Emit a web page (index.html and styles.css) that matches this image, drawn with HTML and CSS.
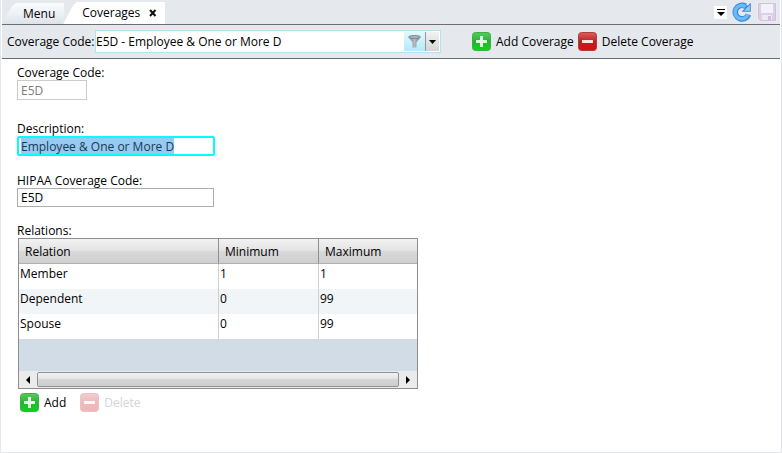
FILE: index.html
```html
<!DOCTYPE html>
<html lang="en">
<head>
	<meta charset="utf-8">
	<title>Coverages</title>
	<link rel="stylesheet" href="styles.css">
</head>
<body>
<!-- shared icons -->
<svg class="defs" width="0" height="0">
	<defs>
		<linearGradient id="green" x1="0" y1="0" x2="0" y2="1">
			<stop offset="0" stop-color="#5cc95f"/>
			<stop offset="0.5" stop-color="#1fb82c"/>
			<stop offset="1" stop-color="#0fd41c"/>
		</linearGradient>
		<linearGradient id="red" x1="0" y1="0" x2="0" y2="1">
			<stop offset="0" stop-color="#d9605f"/>
			<stop offset="0.5" stop-color="#c01f22"/>
			<stop offset="1" stop-color="#d80f12"/>
		</linearGradient>
		<linearGradient id="steel" x1="0" y1="0" x2="1" y2="0">
			<stop offset="0" stop-color="#77818a"/>
			<stop offset="0.5" stop-color="#b5babe"/>
			<stop offset="1" stop-color="#737b83"/>
		</linearGradient>
		<symbol id="plus" viewBox="0 0 19 19">
			<rect x="0.5" y="0.5" width="18" height="18" rx="3" fill="url(#green)" stroke="#3eae48"/>
			<path d="M8 4h3v4h4v3h-4v4h-3v-4h-4v-3h4z" fill="#e4f5e4"/>
		</symbol>
		<symbol id="minus" viewBox="0 0 19 19">
			<rect x="0.5" y="0.5" width="18" height="18" rx="3" fill="url(#red)" stroke="#b9393b"/>
			<path d="M4 8h11v3h-11z" fill="#f8e6e6"/>
		</symbol>
	</defs>
</svg>

<div class="window">
	<header class="tabbar">
		<nav class="tabs">
			<button class="tab" type="button">Menu</button>
			<button class="tab active" type="button">Coverages
				<svg class="close" width="8" height="8" viewBox="0 0 8 8"><path d="M1 1L6.5 7M6.5 1L1 7" stroke="#111" stroke-width="2"/></svg>
			</button>
		</nav>
		<div class="tools">
			<button class="more" type="button" aria-label="More">
				<svg width="8" height="7" viewBox="0 0 8 7"><path d="M0 0h8v1H0zM0 3h8L4 7z" fill="#000"/></svg>
			</button>
			<button class="tool" type="button" aria-label="Refresh">
				<svg width="20" height="20" viewBox="0 0 20 20">
					<path d="M16.5 12.5A6.8 6.8 0 1 1 13.5 4.2" fill="none" stroke="#3b8ad8" stroke-width="5.6"/>
					<path d="M18.8 0.800v9h-9.300l3-3-2-2 3-2.500 2 1.500z" fill="#3b8ad8"/>
					<path d="M16 12.500A6.700 6.700 0 1 1 13.500 4.600" fill="none" stroke="#69bafa" stroke-width="3.400"/>
					<path d="M17.800 3v5.800h-5.800z" fill="#8fcffc"/>
				</svg>
			</button>
			<button class="tool save" type="button" aria-label="Save" disabled>
				<svg width="20" height="20" viewBox="0 0 20 20">
					<path d="M1.500 1.500h17v17h-15l-2-2z" fill="#dccfe8" stroke="#cfc0df"/>
					<rect x="4" y="2" width="12" height="9" fill="#f3f2f9"/>
					<rect x="5" y="13" width="10" height="5" fill="#eceaf2"/>
					<rect x="11" y="14" width="3" height="4" fill="#cfc0df"/>
				</svg>
			</button>
		</div>
	</header>

	<div class="toolbar">
		<label for="coverage">Coverage Code:</label>
		<div class="combo">
			<select id="coverage">
				<option>E5D - Employee &amp; One or More D</option>
			</select>
			<button class="filter" type="button" aria-label="Filter">
				<svg width="13" height="13" viewBox="0 0 13 13">
					<path d="M0.500 2L4.500 7.500V12.500H8.500V7.500L12.500 2z" fill="url(#steel)"/>
					<ellipse cx="6.500" cy="2" rx="6" ry="1.500" fill="#a9b3ba" stroke="#7f8990"/>
				</svg>
			</button>
			<button class="drop" type="button" aria-label="Open list">
				<svg width="7" height="4" viewBox="0 0 7 4"><path d="M0 0h7L3.500 4z" fill="#000"/></svg>
			</button>
		</div>
		<div class="actions">
			<button class="action" type="button"><svg width="19" height="19"><use href="#plus"/></svg>Add Coverage</button>
			<button class="action" type="button"><svg width="19" height="19"><use href="#minus"/></svg>Delete Coverage</button>
		</div>
	</div>

	<main class="content">
		<div class="field code">
			<label for="code">Coverage Code:</label>
			<input id="code" type="text" value="E5D" disabled>
		</div>
		<div class="field description">
			<label for="description">Description:</label>
			<input id="description" type="text" value="Employee &amp; One or More D">
		</div>
		<div class="field hipaa">
			<label for="hipaa">HIPAA Coverage Code:</label>
			<input id="hipaa" type="text" value="E5D">
		</div>

		<div class="relations-title">Relations:</div>
		<div class="grid">
			<table>
				<thead>
					<tr><th class="wide">Relation</th><th class="narrow">Minimum</th><th>Maximum</th></tr>
				</thead>
				<tbody>
					<tr><td>Member</td><td>1</td><td>1</td></tr>
					<tr><td>Dependent</td><td>0</td><td>99</td></tr>
					<tr><td>Spouse</td><td>0</td><td>99</td></tr>
				</tbody>
			</table>
			<div class="scrollbar">
				<button type="button" aria-label="Scroll left"><svg width="4" height="8" viewBox="0 0 4 8"><path d="M4 0v8L0 4z"/></svg></button>
				<div class="thumb"></div>
				<button type="button" aria-label="Scroll right"><svg width="4" height="8" viewBox="0 0 4 8"><path d="M0 0v8L4 4z"/></svg></button>
			</div>
		</div>
		<div class="row-actions">
			<button class="action" type="button"><svg width="19" height="19"><use href="#plus"/></svg>Add</button>
			<button class="action" type="button" disabled><svg width="19" height="19"><use href="#minus"/></svg>Delete</button>
		</div>
	</main>
</div>
<script>
	// start with the description ready to be overtyped
	const description = document.getElementById("description");
	description.focus();
	description.select();
</script>
</body>
</html>
```
FILE: styles.css
```css
* {
	box-sizing: border-box;
}
body {
	margin: 0;
	background: #fff;
	color: #000;
	font-family: "Open Sans", "Noto Sans", sans-serif;
	font-size: 12px;
	line-height: 16px;
}
button, input, select {
	margin: 0;
	padding: 0;
	border: 0;
	background: none;
	color: inherit;
	font: inherit;
}
svg {
	display: block;
	flex: none;
}
.defs {
	position: absolute;
}
.window {
	min-height: 100vh;
	padding: 0 1px;
	border: 1px solid #e5e5f0;
	border-top: 0;
}

/* tabs */
.tabbar {
	display: flex;
	justify-content: space-between;
	height: 25px;
	background: #e5e8ed;
	border-bottom: 1px solid #6e6e72;
}
.tabs {
	display: flex;
	align-items: flex-end;
}
.tab {
	display: flex;
	align-items: center;
	height: 21px;
	padding: 0 9px 0 21px;
	background: linear-gradient(#fafbfd, #eef1f6 50%, #dde2ea);
	clip-path: polygon(0 100%, 10px 3px, 14px 0, 100% 0, 100% 100%);
}
.tab.active {
	height: 22px;
	gap: 9px;
	margin-left: -1px;
	padding: 0 8px 0 19px;
	background: #fff;
}
.tools {
	display: flex;
	align-items: center;
	gap: 5px;
	padding-right: 3px;
}
.more {
	display: flex;
	align-items: center;
	justify-content: center;
	width: 13px;
	height: 13px;
	background: #fff;
}
.save {
	background: #eceaf2;
}

/* coverage picker */
.toolbar {
	display: flex;
	align-items: center;
	height: 34px;
	padding-left: 5px;
	background: #e5e8ed;
	border-bottom: 1px solid #6e6e72;
}
.toolbar label {
	width: 88px;
	white-space: nowrap;
}
.combo {
	display: flex;
	width: 346px;
	height: 23px;
	padding: 1px 1px 1px 0;
	background: #fff;
	border: 1px solid #b5e2ec;
}
.combo select {
	flex: 1;
	min-width: 0;
	appearance: none;
}
.filter, .drop {
	display: flex;
	align-items: center;
	justify-content: center;
}
.filter {
	width: 21px;
	background: linear-gradient(#e2f8fd, #c9f2fb 50%, #b0ebf8);
}
.drop {
	width: 14px;
	background: linear-gradient(#f2f2f2, #d4d4d4);
	border-left: 1px solid #999;
}
.actions {
	display: flex;
	gap: 4px;
	margin-left: 31px;
}
.action {
	display: flex;
	align-items: center;
	gap: 5px;
	white-space: nowrap;
}
.action:disabled {
	color: #d4d4d4;
}
.action:disabled svg {
	opacity: 0.3;
}

/* form */
.content {
	padding: 6px 15px;
}
.field label {
	display: block;
	height: 15px;
}
.field input {
	display: block;
	height: 20px;
	padding: 0 3px;
	border: 1px solid #adadb0;
	outline: 0;
}
.code {
	margin-bottom: 21px;
}
.code input {
	width: 70px;
	color: #7c7c7c;
	border-color: #ccc;
}
.description {
	margin-bottom: 17px;
}
.description input {
	width: 198px;
	padding: 0 2px;
	border: 2px solid #00ffff;
	border-radius: 2px;
}
.description input::selection {
	background: #99c9ef;
	color: #123a5c;
}
.hipaa {
	margin-bottom: 16px;
}
.hipaa input {
	width: 197px;
	height: 19px;
}
.relations-title {
	height: 15px;
}

/* relations */
.grid {
	display: flex;
	flex-direction: column;
	justify-content: space-between;
	width: 400px;
	height: 151px;
	margin-left: 1px;
	background: #d2dce7;
	border: 1px solid #8e8e92;
}
table {
	width: 100%;
	table-layout: fixed;
	border-collapse: separate;
	border-spacing: 0;
}
th {
	height: 25px;
	padding: 2px 6px 0;
	background: linear-gradient(#f2f2f2, #e3e3e3 50%, #d9d9da 50%, #cfcfcf);
	border-right: 1px solid #909090;
	border-bottom: 1px solid #b0b0b0;
	font-weight: normal;
	text-align: left;
}
.wide {
	width: 200px;
}
.narrow {
	width: 100px;
}
td {
	height: 25px;
	padding: 0 1px 5px;
	background: #fff;
	border-right: 1px solid #d0d0d0;
}
tr:nth-child(even) td {
	background: #f1f5f8;
}
th:last-child, td:last-child {
	border-right: 0;
}
.scrollbar {
	display: flex;
	height: 17px;
	background: #ebebeb;
}
.scrollbar button {
	display: flex;
	align-items: center;
	justify-content: center;
	width: 18px;
}
.thumb {
	flex: 1;
	margin: 1px 0;
	background: linear-gradient(#f1f1f1, #e5e5e5 45%, #d5d5d5 50%, #cecece);
	border: 1px solid #909090;
	border-radius: 2px;
}
.row-actions {
	display: flex;
	gap: 14px;
	margin: 4px 0 0 3px;
}
```
